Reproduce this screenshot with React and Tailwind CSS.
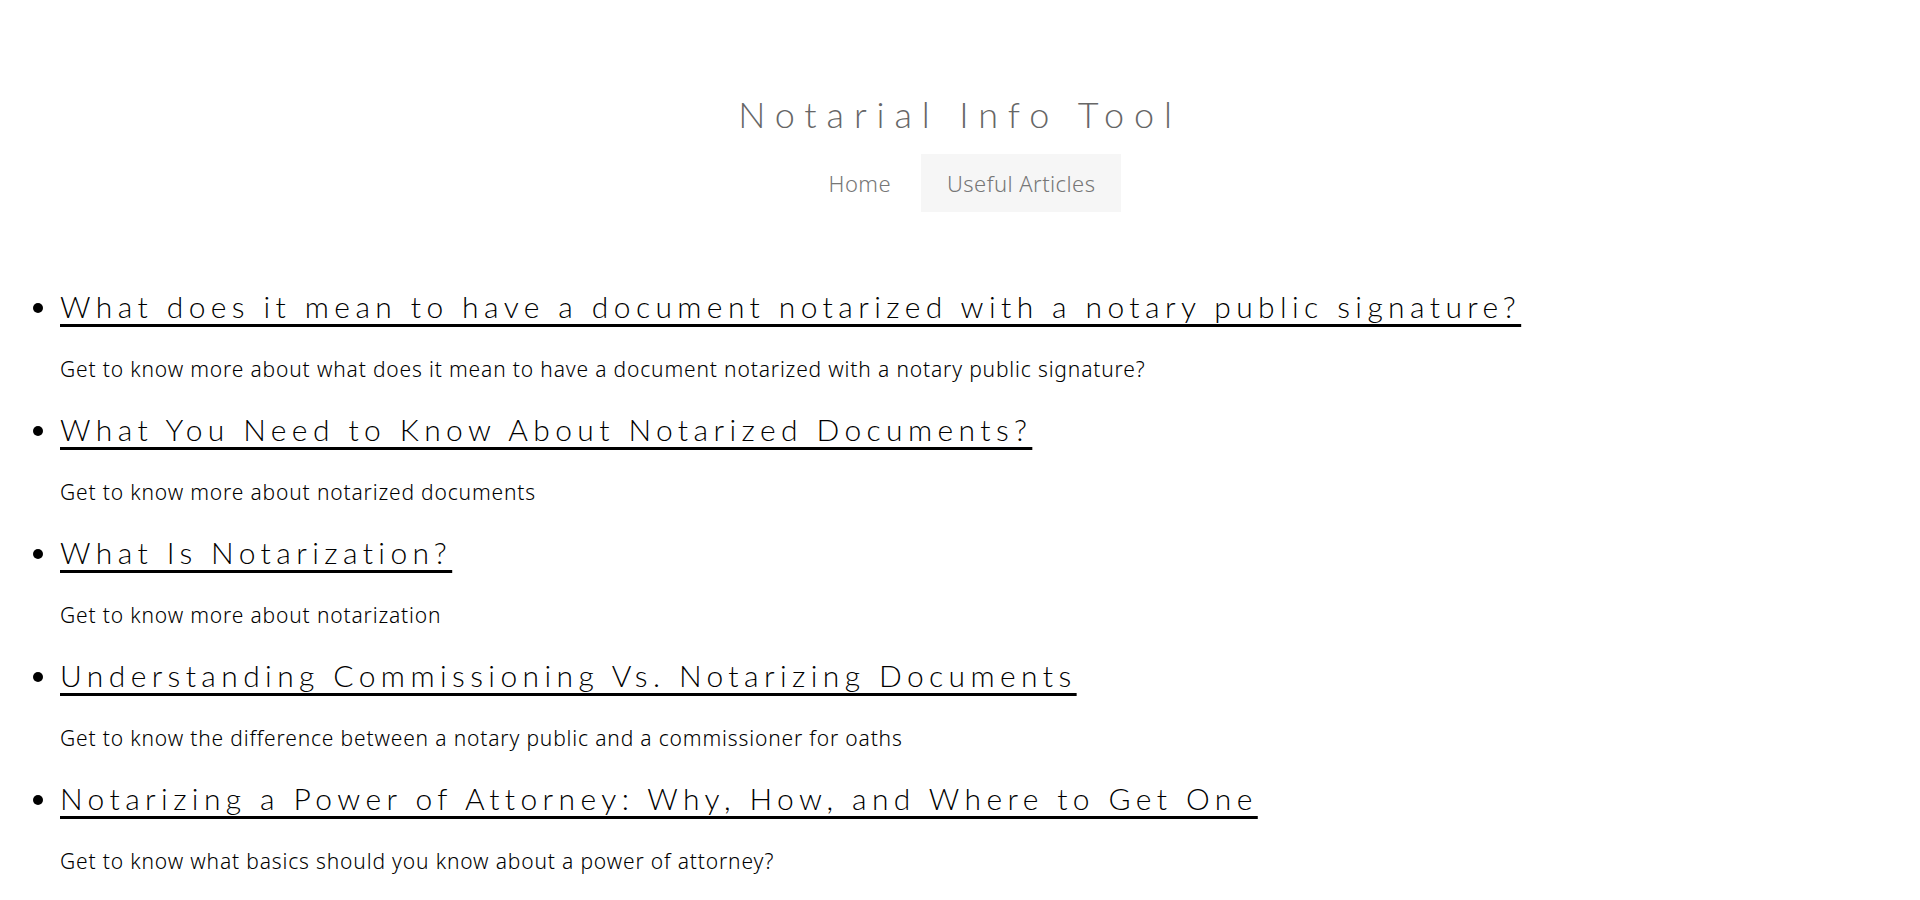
const articles = [
  {
    title: "What does it mean to have a document notarized with a notary public signature?",
    desc: "Get to know more about what does it mean to have a document notarized with a notary public signature?",
  },
  {
    title: "What You Need to Know About Notarized Documents?",
    desc: "Get to know more about notarized documents",
  },
  {
    title: "What Is Notarization?",
    desc: "Get to know more about notarization",
  },
  {
    title: "Understanding Commissioning Vs. Notarizing Documents",
    desc: "Get to know the difference between a notary public and a commissioner for oaths",
  },
  {
    title: "Notarizing a Power of Attorney: Why, How, and Where to Get One",
    desc: "Get to know what basics should you know about a power of attorney?",
  },
];

export default function App() {
  return (
    <div className="min-h-screen bg-white font-['Lato','Noto_Sans',sans-serif] font-light text-black">
      <header className="flex flex-col items-center pt-[91px]">
        <h1 className="text-[36px] leading-[46px] tracking-[0.275em] text-[#666]">
          Notarial Info Tool
        </h1>
        <nav className="mt-[17px] flex font-['Noto_Sans',sans-serif] font-light">
          <a href="#" className="px-[30px] py-[15px] text-[22px] leading-[28px] tracking-[0.02em] text-[#777]">
            Home
          </a>
          <a href="#" className="bg-[#f6f6f6] px-[26px] py-[15px] text-[22px] leading-[28px] tracking-[0.02em] text-[#777]">
            Useful Articles
          </a>
        </nav>
      </header>
      <ul className="mt-[72px] list-disc pl-[60px]">
        {articles.map((a) => (
          <li key={a.title} className="mb-[24px] text-[30px]">
            <a
              href="#"
              className="text-[30px] leading-[40px] tracking-[0.18em] underline decoration-[3px] underline-offset-[6px]"
            >
              {a.title}
            </a>
            <p className="mt-[26px] font-['Noto_Sans',sans-serif] text-[21px] font-light leading-[28px] tracking-[0.04em] text-black">
              {a.desc}
            </p>
          </li>
        ))}
      </ul>
    </div>
  );
}
